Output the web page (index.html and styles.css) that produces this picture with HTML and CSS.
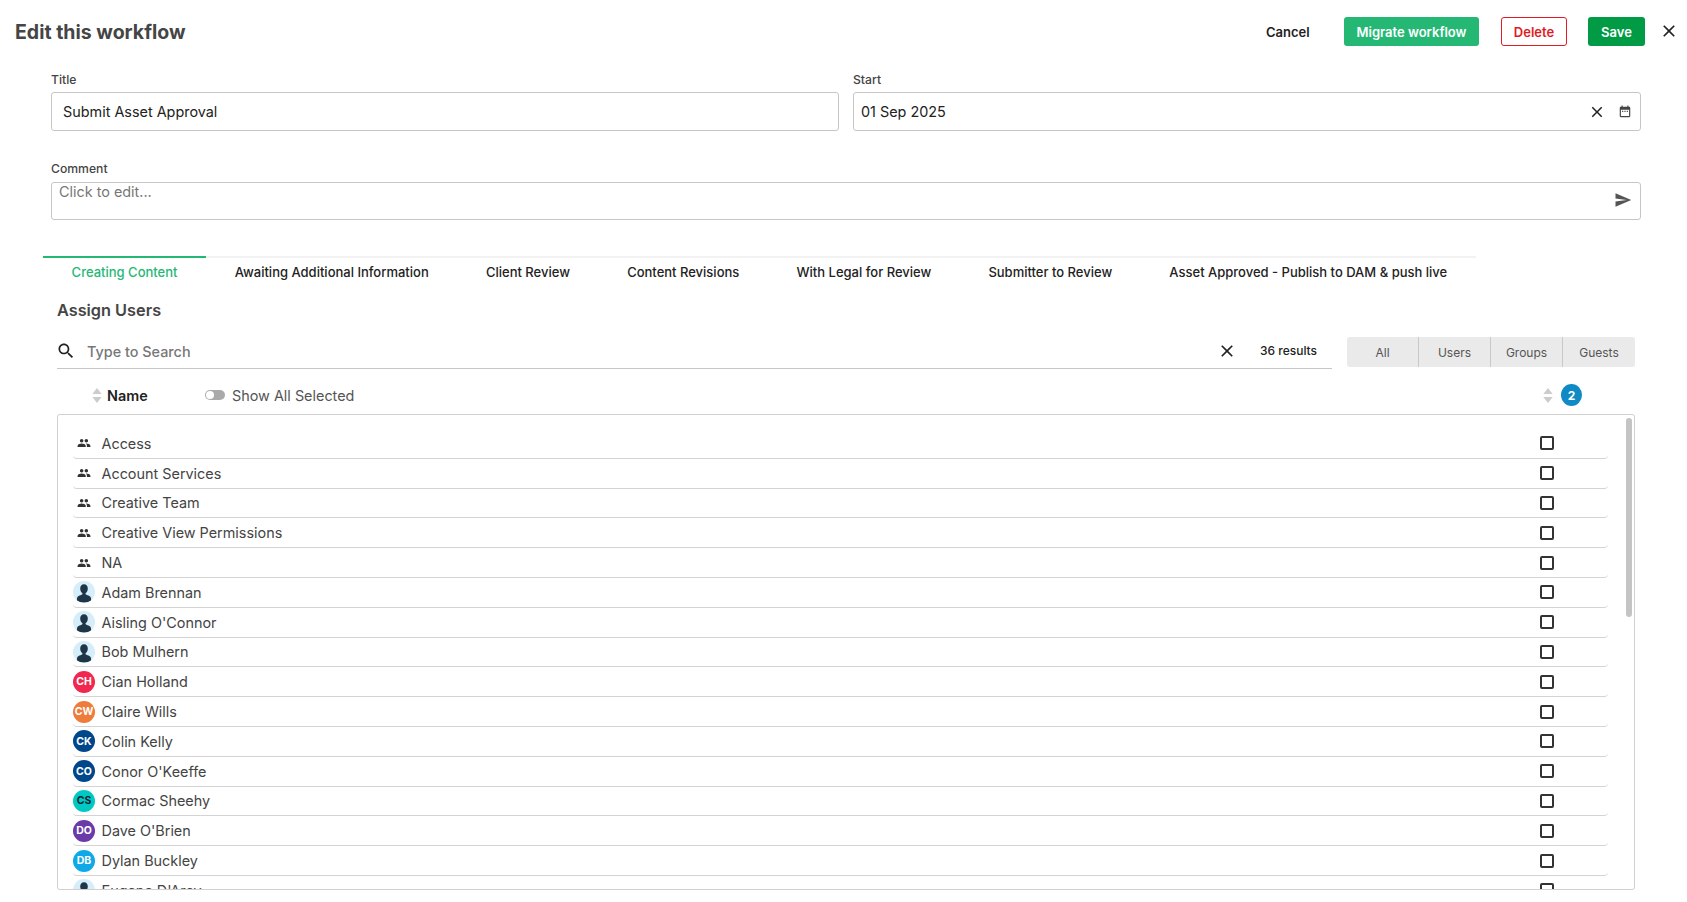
FILE: index.html
```html
<!DOCTYPE html>
<html lang="en">
<head>
<meta charset="utf-8">
<title>Edit this workflow</title>
<link rel="stylesheet" href="styles.css">
</head>
<body>
<svg class="sprite" width="0" height="0" aria-hidden="true">
  <symbol id="i-close" viewBox="0 0 24 24"><path d="M19 6.41L17.59 5 12 10.59 6.41 5 5 6.41 10.59 12 5 17.59 6.41 19 12 13.41 17.59 19 19 17.59 13.41 12z"/></symbol>
  <symbol id="i-search" viewBox="0 0 24 24"><path d="M15.5 14h-.79l-.28-.27C15.41 12.59 16 11.11 16 9.5 16 5.91 13.09 3 9.5 3S3 5.91 3 9.5 5.91 16 9.5 16c1.61 0 3.09-.59 4.23-1.57l.27.28v.79l5 4.99L20.49 19l-4.99-5zm-6 0C7.01 14 5 11.99 5 9.5S7.01 5 9.5 5 14 7.01 14 9.5 11.99 14 9.5 14z"/></symbol>
  <symbol id="i-send" viewBox="0 0 24 24"><path d="M2.01 21L23 12 2.01 3 2 10l15 2-15 2z"/></symbol>
  <symbol id="i-people" viewBox="0 0 24 24"><path d="M16 11c1.66 0 2.99-1.34 2.99-3S17.66 5 16 5c-1.66 0-3 1.34-3 3s1.34 3 3 3zm-8 0c1.66 0 2.99-1.34 2.99-3S9.66 5 8 5C6.34 5 5 6.34 5 8s1.34 3 3 3zm0 2c-2.33 0-7 1.17-7 3.5V19h14v-2.5c0-2.33-4.67-3.5-7-3.5zm8 0c-.29 0-.62.02-.97.05 1.16.84 1.97 1.97 1.97 3.45V19h6v-2.5c0-2.33-4.67-3.5-7-3.5z"/></symbol>
  <symbol id="i-cal" viewBox="0 0 24 24"><path d="M19 3h-1V1h-2v2H8V1H6v2H5c-1.11 0-1.99.9-1.99 2L3 19c0 1.1.89 2 2 2h14c1.1 0 2-.9 2-2V5c0-1.1-.9-2-2-2zm0 16H5V8h14v11zM7 10h2v2H7zm4 0h2v2h-2zm4 0h2v2h-2z"/></symbol>
  <symbol id="i-sort" viewBox="0 0 10 16"><path d="M5 0l5 6.500H0zM5 16L0 9.500h10z"/></symbol>
  <symbol id="i-person" viewBox="0 0 22 22"><path d="M11 3.200c2.400 0 3.800 1.900 3.800 4.200 0 1.900-.8 3.600-2 4.500-.4.300-.4 1.300.2 1.600 2 .9 4.600 1.500 5 3.500.1.700.1 1.600.1 2.500-1.900 1.300-4.300 2-7.100 2s-5.200-.7-7.100-2c0-.9 0-1.800.1-2.500.4-2 3-2.600 5-3.500.6-.3.6-1.300.2-1.600-1.200-.9-2-2.600-2-4.500 0-2.300 1.400-4.200 3.800-4.200z"/></symbol>
</svg>

<header class="top">
  <h1 class="page-title">Edit this workflow</h1>
  <div class="actions">
    <button class="btn btn-plain">Cancel</button>
    <button class="btn btn-migrate">Migrate workflow</button>
    <button class="btn btn-delete">Delete</button>
    <button class="btn btn-save">Save</button>
    <svg class="icon top-close"><use href="#i-close"/></svg>
  </div>
</header>

<section class="fields">
  <div class="field">
    <label class="label">Title</label>
    <div class="input input-title">Submit Asset Approval</div>
  </div>
  <div class="field">
    <label class="label">Start</label>
    <div class="input input-start">
      <span class="grow">01 Sep 2025</span>
      <svg class="icon date-clear"><use href="#i-close"/></svg>
      <svg class="icon date-cal"><use href="#i-cal"/></svg>
    </div>
  </div>
  <div class="field field-wide">
    <label class="label label-comment">Comment</label>
    <div class="input input-comment">
      <span class="grow placeholder">Click to edit...</span>
      <svg class="icon send"><use href="#i-send"/></svg>
    </div>
  </div>
</section>

<nav class="tabs">
  <a class="tab tab-active">Creating Content</a>
  <a class="tab">Awaiting Additional Information</a>
  <a class="tab">Client Review</a>
  <a class="tab">Content Revisions</a>
  <a class="tab">With Legal for Review</a>
  <a class="tab">Submitter to Review</a>
  <a class="tab">Asset Approved - Publish to DAM &amp; push live</a>
</nav>

<main class="assign">
  <h2 class="assign-title">Assign Users</h2>
  <div class="search-row">
    <div class="search">
      <svg class="icon search-icon"><use href="#i-search"/></svg>
      <span class="grow search-text">Type to Search</span>
      <svg class="icon search-clear"><use href="#i-close"/></svg>
      <span class="results">36 results</span>
    </div>
    <div class="segments">
      <span class="segment">All</span>
      <span class="segment">Users</span>
      <span class="segment">Groups</span>
      <span class="segment">Guests</span>
    </div>
  </div>
  <div class="list-head">
    <svg class="sort"><use href="#i-sort"/></svg>
    <span class="name-head">Name</span>
    <span class="toggle"><span class="knob"></span></span>
    <span class="grow show-all">Show All Selected</span>
    <svg class="sort"><use href="#i-sort"/></svg>
    <span class="badge">2</span>
  </div>
  <div class="list">
    <div class="scrollthumb"></div>
    <div class="row"><span class="lead"><svg class="group"><use href="#i-people"/></svg></span><span class="grow">Access</span><span class="check"></span></div>
    <div class="row"><span class="lead"><svg class="group"><use href="#i-people"/></svg></span><span class="grow">Account Services</span><span class="check"></span></div>
    <div class="row"><span class="lead"><svg class="group"><use href="#i-people"/></svg></span><span class="grow">Creative Team</span><span class="check"></span></div>
    <div class="row"><span class="lead"><svg class="group"><use href="#i-people"/></svg></span><span class="grow">Creative View Permissions</span><span class="check"></span></div>
    <div class="row"><span class="lead"><svg class="group"><use href="#i-people"/></svg></span><span class="grow">NA</span><span class="check"></span></div>
    <div class="row"><span class="lead avatar av-person"><svg class="person"><use href="#i-person"/></svg></span><span class="grow">Adam Brennan</span><span class="check"></span></div>
    <div class="row"><span class="lead avatar av-person"><svg class="person"><use href="#i-person"/></svg></span><span class="grow">Aisling O'Connor</span><span class="check"></span></div>
    <div class="row"><span class="lead avatar av-person"><svg class="person"><use href="#i-person"/></svg></span><span class="grow">Bob Mulhern</span><span class="check"></span></div>
    <div class="row"><span class="lead avatar av-red">CH</span><span class="grow">Cian Holland</span><span class="check"></span></div>
    <div class="row"><span class="lead avatar av-orange">CW</span><span class="grow">Claire Wills</span><span class="check"></span></div>
    <div class="row"><span class="lead avatar av-navy">CK</span><span class="grow">Colin Kelly</span><span class="check"></span></div>
    <div class="row"><span class="lead avatar av-navy">CO</span><span class="grow">Conor O'Keeffe</span><span class="check"></span></div>
    <div class="row"><span class="lead avatar av-teal">CS</span><span class="grow">Cormac Sheehy</span><span class="check"></span></div>
    <div class="row"><span class="lead avatar av-purple">DO</span><span class="grow">Dave O'Brien</span><span class="check"></span></div>
    <div class="row"><span class="lead avatar av-sky">DB</span><span class="grow">Dylan Buckley</span><span class="check"></span></div>
    <div class="row"><span class="lead avatar av-person"><svg class="person"><use href="#i-person"/></svg></span><span class="grow">Eugene D'Arcy</span><span class="check"></span></div>
  </div>
</main>
</body>
</html>
```

FILE: styles.css
```css
* { box-sizing: border-box; }
html, body { margin: 0; height: 100%; }
body {
  background: #fff;
  color: #444;
  font-family: Inter, "Liberation Sans", sans-serif;
  font-size: 14.4px;
  overflow: hidden;
}
.sprite { position: absolute; }
.grow { flex: 1; min-width: 0; }
.icon { display: block; fill: #222; flex: none; }

/* header */
.top {
  height: 62px;
  padding: 0 8px 0 15px;
  display: flex;
  align-items: center;
  justify-content: space-between;
}
.page-title { margin: 2px 0 0; font-size: 19.5px; font-weight: 700; color: #454545; }
.actions { display: flex; align-items: center; }
.btn {
  height: 29px;
  margin-top: 1px;
  border: 1px solid transparent;
  border-radius: 3px;
  background: none;
  font: 600 13px Inter, "Liberation Sans", sans-serif;
  padding: 0;
}
.btn-plain { width: 43px; color: #222; margin-right: 36px; }
.btn-migrate { width: 135px; background: #25b875; color: #fff; margin-right: 22px; }
.btn-delete { width: 66px; border-color: #e01b24; color: #e01b24; margin-right: 21px; }
.btn-save { width: 57px; background: #019a45; color: #fff; margin-right: 14px; }
.top-close { width: 20px; height: 20px; margin-top: -1px; }

/* form */
.fields {
  margin: 0 46px 0 51px;
  display: grid;
  grid-template-columns: 788px 1fr;
  column-gap: 14px;
  row-gap: 21px;
}
.field-wide { grid-column: 1 / -1; }
.label { display: block; height: 30px; padding-top: 10px; font-size: 12.2px; line-height: 15px; font-weight: 500; color: #444; }
.label-comment { padding-top: 9px; }
.input {
  height: 39px;
  border: 1px solid #c6c6c6;
  border-radius: 3px;
  display: flex;
  align-items: center;
  color: #222;
}
.input-title { padding-left: 11px; }
.input-start { padding: 0 8px 0 7px; }
.date-clear { width: 18px; height: 18px; margin-right: 12px; }
.date-cal { width: 14px; height: 14px; fill: #444; }
.input-comment { height: 38px; align-items: flex-start; padding: 0 8px 0 7px; }
.placeholder { color: #777; line-height: 18px; }
.send { width: 18px; height: 18px; fill: #555; margin-top: 8px; }

/* tabs */
.tabs {
  margin: 36px 0 0 43px;
  width: 1433px;
  display: flex;
  border-top: 2px solid #f2f2f2;
}
.tab {
  margin-top: -2px;
  padding: 0 28.6px;
  height: 32px;
  line-height: 28px;
  font-size: 13px;
  font-weight: 500;
  color: #222;
  white-space: nowrap;
  border-top: 2px solid transparent;
}
.tab-active { color: #25b875; border-top-color: #25b875; }

/* assign */
.assign { margin: 0 52px 0 57px; }
.assign-title { margin: 12px 0 0; font-size: 16.3px; line-height: 20px; font-weight: 600; color: #454545; }
.search-row { margin-top: 16px; display: flex; align-items: flex-start; }
.search {
  width: 1275px;
  height: 33px;
  padding-bottom: 2px;
  border-bottom: 1px solid #c6c6c6;
  display: flex;
  align-items: center;
}
.search-icon { width: 20px; height: 20px; margin: 0 11px 0 -1px; }
.search-text { color: #777; font-weight: 500; }
.search-clear { width: 20px; height: 20px; margin-right: 23px; }
.results { width: 72px; font-size: 12px; font-weight: 500; color: #222; margin-top: -2px; }
.segments {
  margin: 1px 0 0 15px;
  width: 288px;
  height: 30px;
  background: #eaeaea;
  border-radius: 3px;
  display: grid;
  grid-template-columns: repeat(4, 1fr);
}
.segment {
  display: flex;
  align-items: center;
  justify-content: center;
  font-size: 12px;
  color: #555;
  border-right: 1px solid #c8c8c8;
}
.segment:last-child { border-right: 0; }
.list-head {
  height: 45px;
  padding: 7px 0 0 35px;
  display: flex;
  align-items: center;
}
.sort { width: 10px; height: 15px; fill: #ccc; flex: none; }
.name-head { margin-left: 5px; width: 98px; font-weight: 600; color: #222; }
.toggle { width: 20px; height: 10px; border-radius: 5px; background: #aaa; position: relative; margin-right: 7px; }
.knob { position: absolute; left: 1px; top: 1px; width: 8px; height: 8px; border-radius: 50%; background: #fff; }
.show-all { color: #555; }
.badge {
  margin: 0 53px 0 8px;
  width: 21px;
  height: 22px;
  border-radius: 50%;
  background: #0f8ac4;
  color: #fff;
  font-size: 12px;
  font-weight: 700;
  display: flex;
  align-items: center;
  justify-content: center;
}
.list {
  height: 476px;
  border: 1px solid #d0d0d0;
  border-radius: 3px;
  padding: 14px 26px 0 15px;
  overflow: hidden;
  position: relative;
}
.scrollthumb {
  position: absolute;
  top: 3px;
  right: 2px;
  width: 6px;
  height: 199px;
  border-radius: 3px;
  background: #c4c4c4;
}
.row {
  height: 29.8px;
  border-bottom: 1px solid #d4d4d4;
  border-radius: 0 0 4px 4px;
  display: flex;
  align-items: center;
}
.lead {
  width: 22px;
  height: 22px;
  margin-right: 6.5px;
  flex: none;
  display: flex;
  align-items: center;
  justify-content: center;
}
.group { width: 14px; height: 14px; fill: #333; }
.avatar {
  border-radius: 50%;
  font-size: 10.5px;
  font-weight: 700;
  color: #fff;
  overflow: hidden;
}
.person { width: 22px; height: 22px; fill: #1f3648; display: block; }
.av-person { background: #d6eefa; }
.av-red { background: #f0284f; }
.av-orange { background: #ee7c3a; }
.av-navy { background: #00468b; }
.av-teal { background: #00c9c4; color: #123; }
.av-purple { background: #6a3aa8; }
.av-sky { background: #0fa9e8; }
.check {
  width: 14px;
  height: 14px;
  margin-right: 54px;
  border: 2px solid #333;
  border-radius: 2px;
  flex: none;
}
```
